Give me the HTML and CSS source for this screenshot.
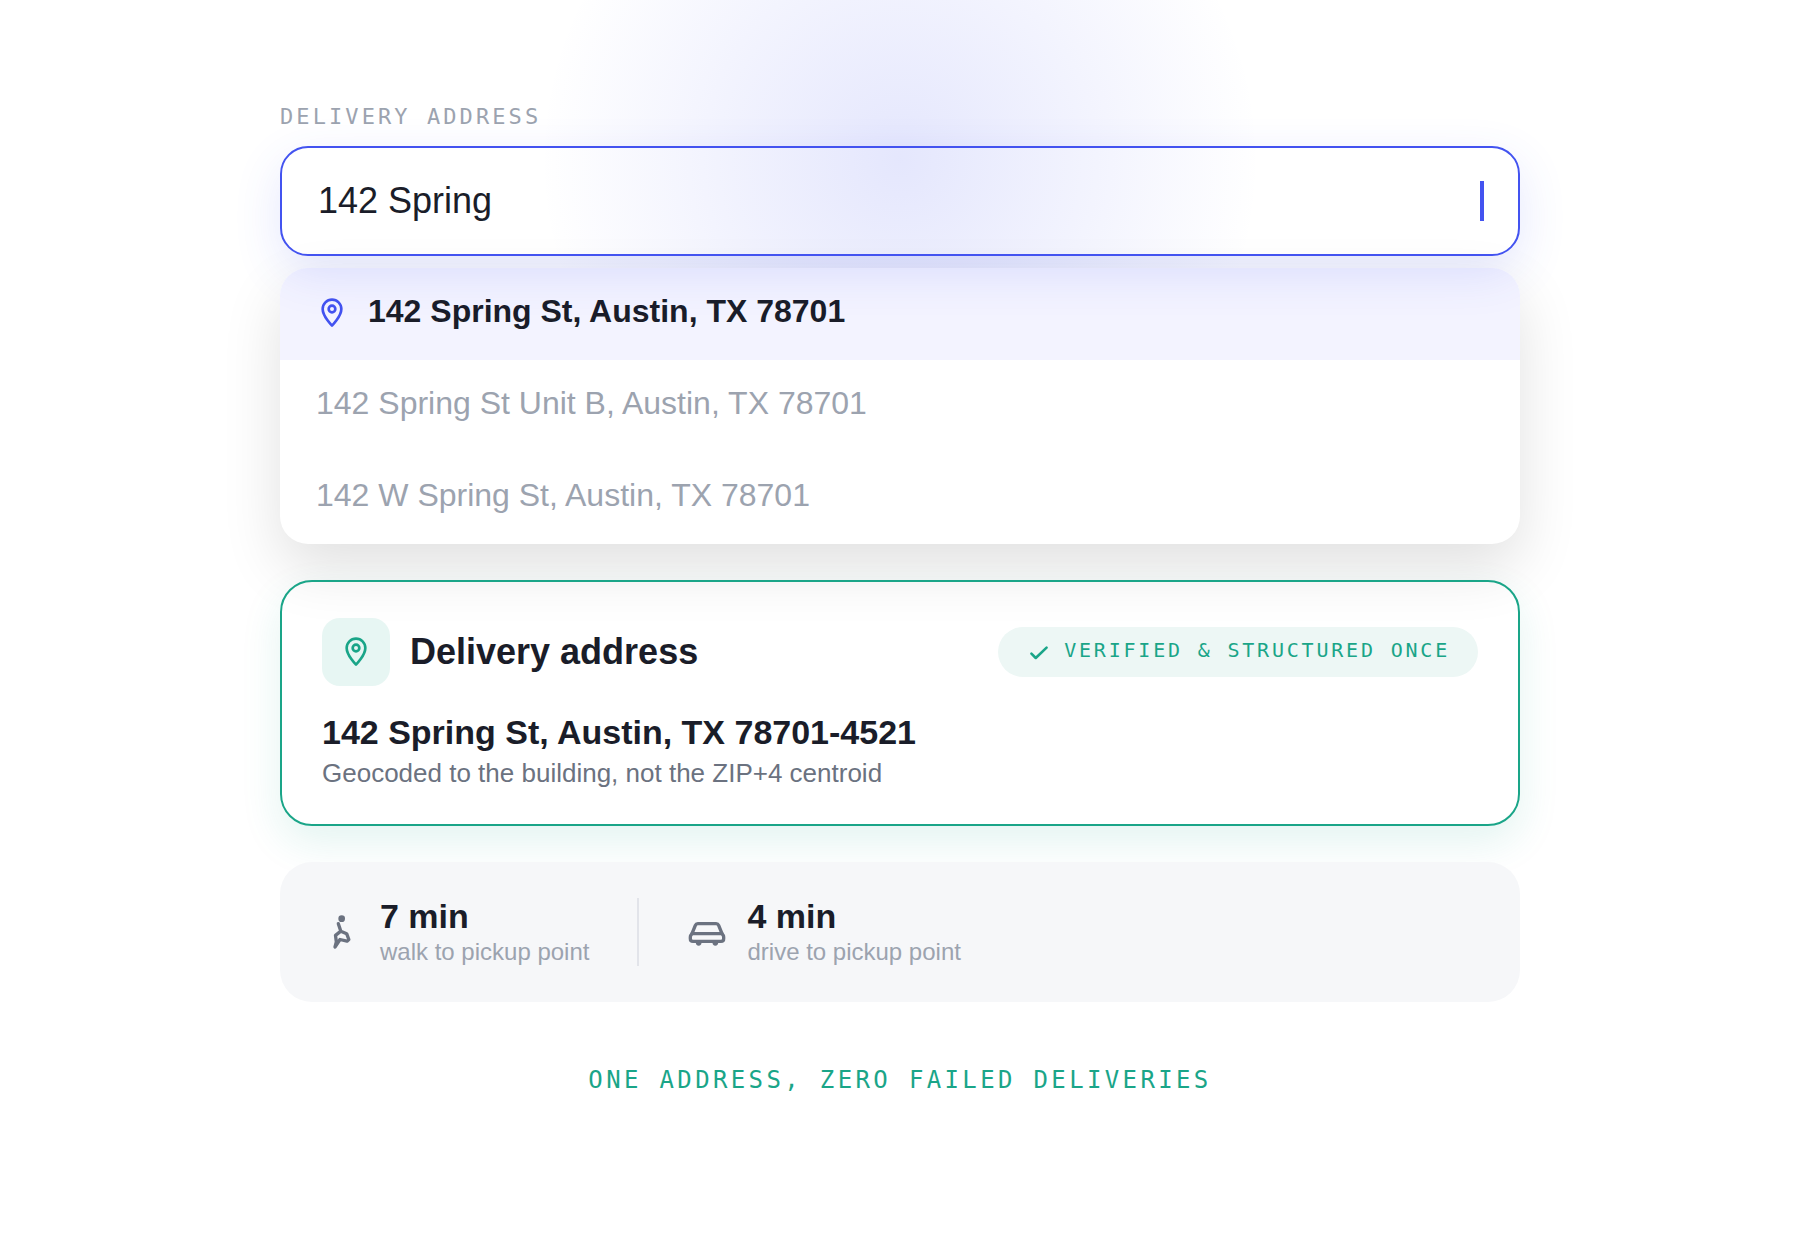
FILE: index.html
```html
<!DOCTYPE html>
<html lang="en">
<head>
    <meta charset="UTF-8">
    <meta name="viewport" content="width=device-width, initial-scale=1">
    <title>Delivery address</title>
    <link rel="stylesheet" href="styles.css">
</head>
<body>
    <main class="page">
        <div class="glow"></div>

        <!-- Address search -->
        <label class="field-label" for="address">DELIVERY ADDRESS</label>
        <div class="field">
            <input class="field-input" type="text" id="address" name="address" value="142 Spring" autocomplete="off">
            <span class="caret"></span>
        </div>

        <ul class="suggestions">
            <li>
                <button type="button" class="suggestion active">
                    <svg class="pin" viewBox="0 0 24 24"><path d="M12 21.5s7-7 7-12.5A7 7 0 0 0 5 9c0 5.5 7 12.5 7 12.5z"/><circle cx="12" cy="9" r="2.5"/></svg>
                    142 Spring St, Austin, TX 78701
                </button>
            </li>
            <li><button type="button" class="suggestion">142 Spring St Unit B, Austin, TX 78701</button></li>
            <li><button type="button" class="suggestion">142 W Spring St, Austin, TX 78701</button></li>
        </ul>

        <!-- Verified result -->
        <section class="card">
            <div class="card-header">
                <span class="tile">
                    <svg class="pin" viewBox="0 0 24 24"><path d="M12 21.5s7-7 7-12.5A7 7 0 0 0 5 9c0 5.5 7 12.5 7 12.5z"/><circle cx="12" cy="9" r="2.5"/></svg>
                </span>
                <h1 class="card-title">Delivery address</h1>
                <span class="badge">
                    <svg class="check" viewBox="0 0 24 24"><path d="M5 13.5l4 4L19 8"/></svg>
                    VERIFIED &amp; STRUCTURED ONCE
                </span>
            </div>
            <p class="address">142 Spring St, Austin, TX 78701-4521</p>
            <p class="note">Geocoded to the building, not the ZIP+4 centroid</p>
        </section>

        <!-- Travel times -->
        <section class="travel">
            <div class="trip">
                <svg class="trip-icon" viewBox="0 0 24 24"><circle class="dot" cx="13" cy="4" r="2"/><path d="M11 7l1.5 4.5L16 13l1.3 3.5-1.1 1-4.2-1L9 21l.8-3-.5-4 3.2-2.5"/></svg>
                <div>
                    <p class="trip-time">7 min</p>
                    <p class="trip-text">walk to pickup point</p>
                </div>
            </div>
            <div class="trip">
                <svg class="trip-icon" viewBox="0 0 24 24"><path d="M3 13l2-5q.4-1 1.500-1h11q1.1 0 1.5 1l2 5"/><path d="M3 13h18q1 1 1 2v1q0 1.600-1.600 1.600H3.600Q2 17.600 2 16v-1q0-1 1-2z"/><circle class="dot" cx="7" cy="18.5" r="1.7"/><circle class="dot" cx="17" cy="18.5" r="1.7"/></svg>
                <div>
                    <p class="trip-time">4 min</p>
                    <p class="trip-text">drive to pickup point</p>
                </div>
            </div>
        </section>

        <p class="tagline">ONE ADDRESS, ZERO FAILED DELIVERIES</p>
    </main>
</body>
</html>
```
FILE: styles.css
```css
* {
    box-sizing: border-box;
}

body {
    margin: 0;
    background: #fff;
    color: #1a1d29;
    font-family: "Liberation Sans", Arial, sans-serif;
}

h1, p, ul {
    margin: 0;
    padding: 0;
}

svg {
    flex: none;
    fill: none;
    stroke: currentColor;
    stroke-width: 2;
    stroke-linecap: round;
    stroke-linejoin: round;
}

.page {
    position: relative;
    max-width: 1320px;
    margin: 0 auto;
    padding: 104px 40px;
}

/* soft light behind the search field */
.glow {
    position: absolute;
    z-index: -1;
    top: -340px;
    left: 50%;
    width: 1000px;
    height: 1000px;
    transform: translateX(-50%);
    background: radial-gradient(circle closest-side, rgba(67, 83, 240, 0.14), transparent 72%);
}

.field-label,
.badge,
.tagline {
    font-family: "DejaVu Sans Mono", monospace;
    letter-spacing: 0.14em;
}

.field-label {
    display: block;
    margin-bottom: 16px;
    color: #9ca3af;
    font-size: 22px;
    line-height: 26px;
}

.field {
    position: relative;
    z-index: 1;
    display: flex;
    align-items: center;
    padding: 32px 34px 32px 36px;
    border: 2px solid #4353f0;
    border-radius: 28px;
    box-shadow: 0 16px 48px rgba(67, 83, 240, 0.14);
}

.field-input {
    flex: 1;
    min-width: 0;
    padding: 0;
    border: 0;
    outline: 0;
    background: none;
    color: inherit;
    font: inherit;
    font-size: 36px;
    line-height: 42px;
}

.caret {
    width: 4px;
    height: 40px;
    background: #4353f0;
}

.suggestions {
    margin-top: 12px;
    overflow: hidden;
    border-radius: 28px;
    background: #fff;
    box-shadow: 0 24px 60px rgba(0, 0, 0, 0.12);
    list-style: none;
}

.suggestion {
    display: flex;
    align-items: flex-start;
    gap: 20px;
    width: 100%;
    min-height: 92px;
    padding: 29px 36px;
    border: 0;
    background: none;
    color: #9ca3af;
    font: inherit;
    font-size: 32px;
    line-height: 28px;
    text-align: left;
}

.suggestion.active {
    background: #f3f3ff;
    color: #1a1d29;
    font-weight: bold;
}

.pin {
    width: 32px;
    height: 32px;
    color: #4353f0;
}

.card {
    margin-top: 36px;
    padding: 36px 40px;
    border: 2px solid #1aa588;
    border-radius: 32px;
    box-shadow: 0 16px 40px rgba(26, 165, 136, 0.12);
}

.card-header {
    display: flex;
    align-items: center;
    gap: 20px;
    margin-bottom: 26px;
}

.tile {
    display: flex;
    align-items: center;
    justify-content: center;
    width: 68px;
    height: 68px;
    border-radius: 18px;
    background: #e7f6f3;
}

.tile .pin {
    color: #1aa588;
}

.card-title {
    font-size: 36px;
}

.badge {
    display: flex;
    align-items: flex-start;
    gap: 12px;
    margin-left: auto;
    padding: 12px 28px;
    border-radius: 26px;
    background: #edf7f5;
    color: #1aa588;
    font-size: 20px;
    line-height: 23px;
}

.check {
    width: 26px;
    height: 26px;
    stroke-width: 2.4;
}

.address,
.trip-time {
    font-size: 34px;
    font-weight: bold;
    line-height: 40px;
}

.note {
    margin-top: 6px;
    color: #6b7280;
    font-size: 26px;
    line-height: 30px;
}

.travel {
    display: flex;
    margin-top: 36px;
    padding: 36px 40px;
    border-radius: 32px;
    background: #f6f7f9;
}

.trip {
    display: flex;
    align-items: center;
    gap: 20px;
}

.trip + .trip {
    margin-left: 48px;
    padding-left: 48px;
    border-left: 2px solid #e2e4ea;
}

.trip-icon {
    width: 40px;
    height: 40px;
    color: #6b7280;
}

.dot {
    fill: currentColor;
    stroke: none;
}

.trip-time {
    margin-bottom: 4px;
    line-height: 36px;
}

.trip-text {
    color: #9ca3af;
    font-size: 24px;
    line-height: 28px;
}

.tagline {
    margin-top: 64px;
    color: #1aa588;
    font-size: 24px;
    line-height: 28px;
    text-align: center;
}
```
